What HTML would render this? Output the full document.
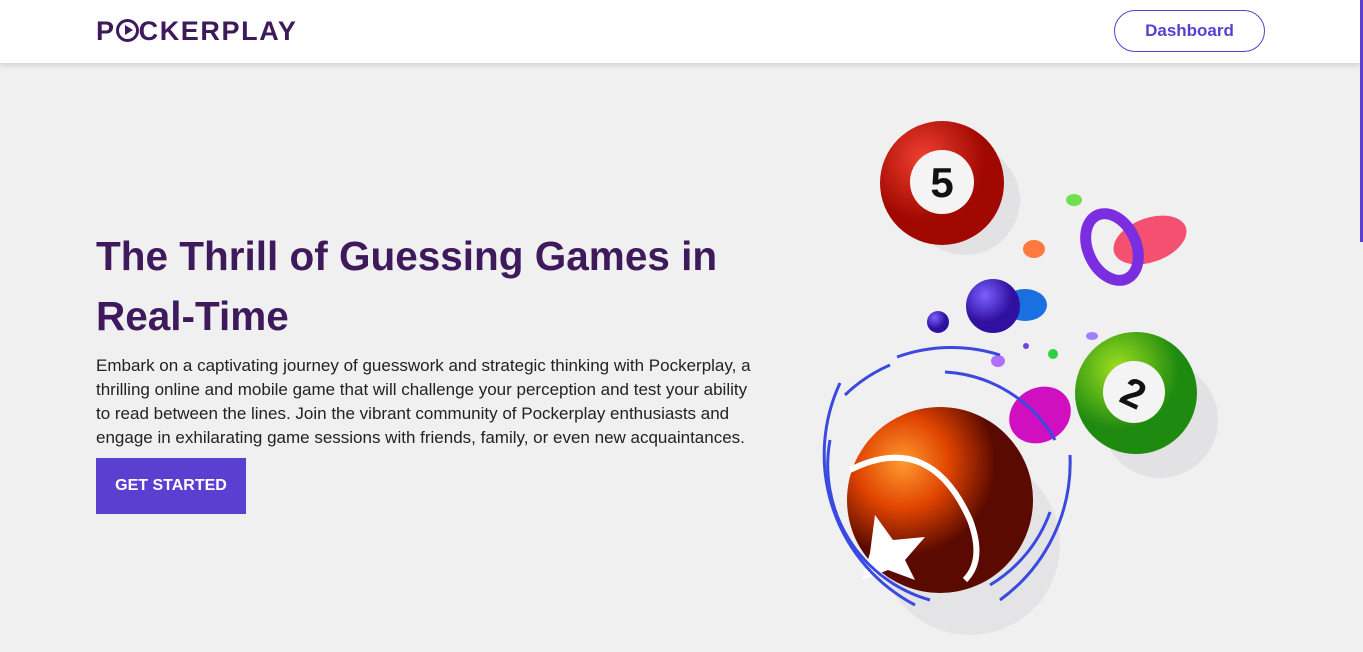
<!DOCTYPE html>
<html><head><meta charset="utf-8"><style>
*{margin:0;padding:0;box-sizing:border-box}
body{width:1363px;height:652px;overflow:hidden;background:#f0f0f0;font-family:"Liberation Sans",sans-serif;position:relative}
.hdr{position:absolute;left:0;top:0;width:1360px;height:63px;background:#fff;box-shadow:0 2px 6px rgba(0,0,0,.15)}
.logo{position:absolute;left:96px;top:16px;font-size:27px;font-weight:900;color:#3e1a5c;letter-spacing:1.6px}
.dash{position:absolute;left:1114px;top:10px;width:151px;height:42px;border:1.5px solid #5a3fd0;border-radius:21px;color:#5a3fd0;font-weight:700;font-size:17px;text-align:center;line-height:40px}
.sb{position:absolute;left:1360px;top:0;width:3px;height:242px;background:#5a3fd0}
h1{position:absolute;left:96px;top:226px;width:700px;font-size:40.5px;line-height:60px;color:#3e1a5c;font-weight:700}
p{position:absolute;left:96px;top:354px;white-space:nowrap;font-size:17px;line-height:24px;color:#222}
.btn{position:absolute;left:96px;top:458px;width:150px;height:56px;background:#5a3fd0;color:#fff;font-weight:700;font-size:16px;line-height:56px;text-align:center}
svg{position:absolute;left:0;top:0}
</style></head><body>
<div class="hdr"><div class="logo">P<span style="display:inline-block;width:23px;height:23px;border:3px solid #3e1a5c;border-radius:50%;vertical-align:-2px;position:relative"><span style="position:absolute;left:6px;top:3px;border-left:8px solid #3e1a5c;border-top:5px solid transparent;border-bottom:5px solid transparent"></span></span>CKERPLAY</div>
<div class="dash">Dashboard</div></div>
<div class="sb"></div>
<h1>The Thrill of Guessing Games in Real-Time</h1>
<p>Embark on a captivating journey of guesswork and strategic thinking with Pockerplay, a<br>thrilling online and mobile game that will challenge your perception and test your ability<br>to read between the lines. Join the vibrant community of Pockerplay enthusiasts and<br>engage in exhilarating game sessions with friends, family, or even new acquaintances.</p>
<div class="btn">GET STARTED</div>
<svg width="1363" height="652">
<defs>
<radialGradient id="r" cx="35%" cy="30%"><stop offset="0" stop-color="#f04030"/><stop offset="1" stop-color="#a00800"/></radialGradient>
<radialGradient id="g" cx="35%" cy="30%"><stop offset="0" stop-color="#9ee020"/><stop offset="1" stop-color="#1f8a10"/></radialGradient>
<radialGradient id="o" cx="30%" cy="30%"><stop offset="0" stop-color="#ff9a30"/><stop offset=".5" stop-color="#e04400"/><stop offset="1" stop-color="#5a0a00"/></radialGradient>
<radialGradient id="b" cx="35%" cy="30%"><stop offset="0" stop-color="#7a60ff"/><stop offset="1" stop-color="#3010a0"/></radialGradient>
</defs>
<circle cx="965" cy="200" r="55" fill="#e2e2e4"/>
<circle cx="1160" cy="420" r="58" fill="#e2e2e4"/>
<circle cx="970" cy="545" r="90" fill="#e4e4e6"/>
<ellipse cx="1150" cy="240" rx="38" ry="22" fill="#f45070" transform="rotate(-20 1150 240)"/>
<ellipse cx="1112" cy="247" rx="24" ry="35" fill="none" stroke="#7a2ee0" stroke-width="11" transform="rotate(-25 1112 247)"/>
<ellipse cx="1074" cy="200" rx="8" ry="6" fill="#70e050"/>
<ellipse cx="1034" cy="249" rx="11" ry="9" fill="#ff7a40"/>
<ellipse cx="1025" cy="305" rx="22" ry="16" fill="#1a70e0"/>
<circle cx="993" cy="306" r="27" fill="url(#b)"/>
<circle cx="938" cy="322" r="11" fill="url(#b)"/>
<ellipse cx="1040" cy="415" rx="32" ry="27" fill="#d010c0" transform="rotate(-30 1040 415)"/>
<circle cx="1053" cy="354" r="5" fill="#30d040"/><circle cx="1026" cy="346" r="3" fill="#7040e0"/><ellipse cx="998" cy="361" rx="7" ry="6" fill="#b070ff"/><ellipse cx="1092" cy="336" rx="6" ry="4" fill="#a080ff"/>
<circle cx="942" cy="183" r="62" fill="url(#r)"/>
<circle cx="942" cy="182" r="32" fill="#f4f4f4"/>
<text x="942" y="197" font-size="42" font-weight="700" text-anchor="middle" fill="#111" font-family="Liberation Sans">5</text>
<circle cx="1136" cy="393" r="61" fill="url(#g)"/>
<circle cx="1134" cy="392" r="31" fill="#f4f4f4"/>
<text x="1134" y="407" font-size="40" font-weight="700" text-anchor="middle" fill="#111" transform="rotate(25 1134 392)" font-family="Liberation Sans">2</text>
<circle cx="940" cy="500" r="93" fill="url(#o)"/>
<path d="M850 470 Q930 430 970 520 Q985 560 965 580" fill="none" stroke="#fff" stroke-width="6"/>
<polygon points="875,515 893,540 925,537 905,560 915,580 888,570 862,580 870,553" fill="#fff"/>
<g fill="none" stroke="#3a4ae0" stroke-width="3">
<path d="M897 357 A160 160 0 0 1 1000 355"/>
<path d="M945 372 A135 135 0 0 1 1055 440"/>
<path d="M890 365 A150 150 0 0 0 845 395"/>
<path d="M840 383 A170 170 0 0 0 915 605"/>
<path d="M830 440 A140 140 0 0 0 930 600"/>
<path d="M1050 512 A140 140 0 0 1 990 585"/>
<path d="M1070 455 A170 170 0 0 1 1000 600"/>
</g>
</svg>
</body></html>
